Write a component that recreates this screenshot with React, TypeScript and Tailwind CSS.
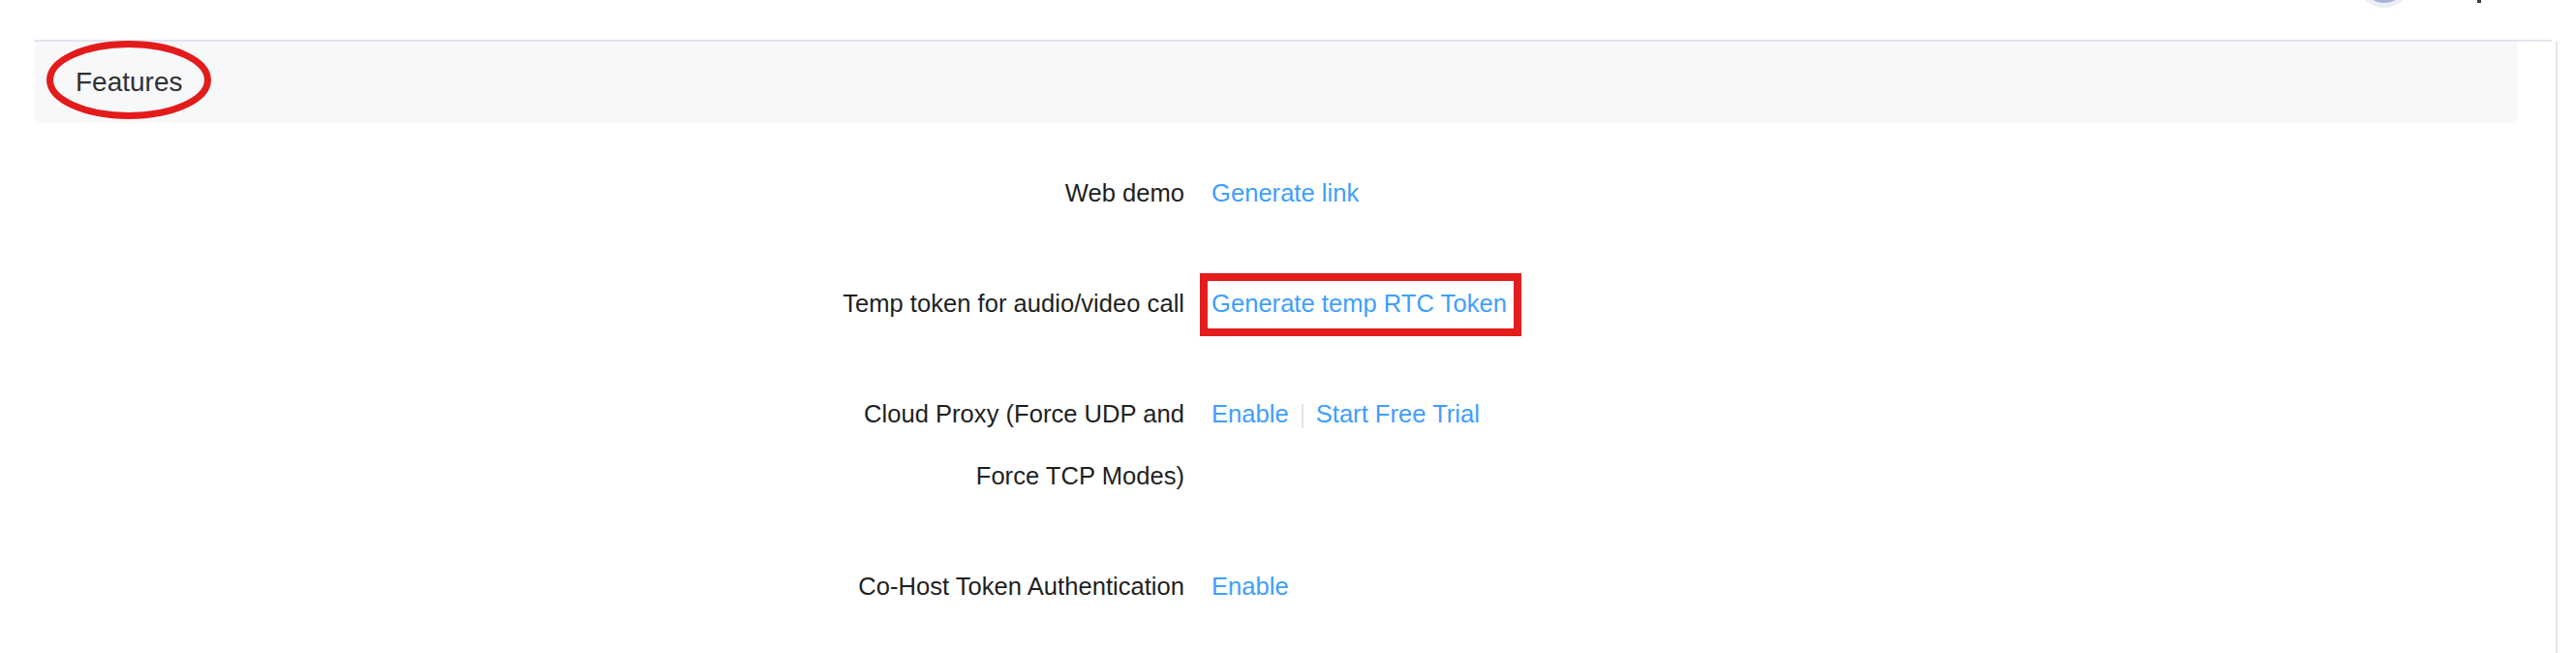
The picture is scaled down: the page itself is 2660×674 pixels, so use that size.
import type { ReactNode } from 'react'

interface FeatureRow {
  label: string
  value: ReactNode
}

function Link({ children }: { children: ReactNode }) {
  return <span className="text-[#409eff] cursor-pointer">{children}</span>
}

const ROWS: FeatureRow[] = [
  { label: 'Web demo', value: <Link>Generate link</Link> },
  {
    label: 'Temp token for audio/video call',
    value: (
      <span className="relative inline-block">
        <Link>Generate temp RTC Token</Link>
        {/* annotation box */}
        <span className="absolute -left-[12px] -right-[15px] top-[1px] -bottom-[2px] border-[8px] border-[#e31c1c] pointer-events-none" />
      </span>
    ),
  },
  {
    label: 'Cloud Proxy (Force UDP and Force TCP Modes)',
    value: (
      <>
        <Link>Enable</Link>
        <span className="inline-block w-[2px] h-[25px] mx-[13px] align-middle bg-[#e2e4ec]" />
        <Link>Start Free Trial</Link>
      </>
    ),
  },
  { label: 'Co-Host Token Authentication', value: <Link>Enable</Link> },
]

export default function App() {
  return (
    <div className="w-[2660px] h-[674px] overflow-hidden bg-white font-['Liberation_Sans',Arial,sans-serif]">
      {/* top bar, cut off */}
      <div className="h-[41px] flex items-start pl-[2433px]">
        <div className="w-[58px] h-[58px] -mt-[50px] rounded-full bg-[#eceef5] flex items-center justify-center">
          <div className="w-[48px] h-[48px] rounded-full bg-[#a7b5d2]" />
        </div>
        <div className="ml-[67px] w-[4px] h-[3px] bg-[#3a3f4b]" />
      </div>

      <div className="flex pl-[35px] h-[633px]">
        <div className="w-[2600px] border-t-2 border-[#e4e5ee]">
          {/* section header */}
          <div className="relative ml-[1px] w-[2563px] h-[84px] bg-[#f7f8fa] rounded-b-[6px] flex items-center pl-[42px]">
            <span className="text-[28px] text-[#303133]">Features</span>
            <svg className="absolute left-[12px] -top-[1px] w-[170px] h-[81px] pointer-events-none" viewBox="0 0 170 81">
              <ellipse cx="85" cy="40.5" rx="81.5" ry="37" fill="none" stroke="#e31b1b" strokeWidth="7" />
            </svg>
          </div>

          {/* form rows */}
          <div className="mt-[40px] pl-[816px] flex flex-col">
            {ROWS.map(row => (
              <div key={row.label} className="flex mb-[50px] text-[25.6px] leading-[64px]">
                <div className="w-[400px] shrink-0 pr-[28px] text-right text-[#1f1f1f]">{row.label}</div>
                <div className="flex-1">{row.value}</div>
              </div>
            ))}
          </div>
        </div>
        <div className="ml-[4px] mt-[2px] w-[2px] bg-[#e4e5ee]" />
      </div>
    </div>
  )
}
